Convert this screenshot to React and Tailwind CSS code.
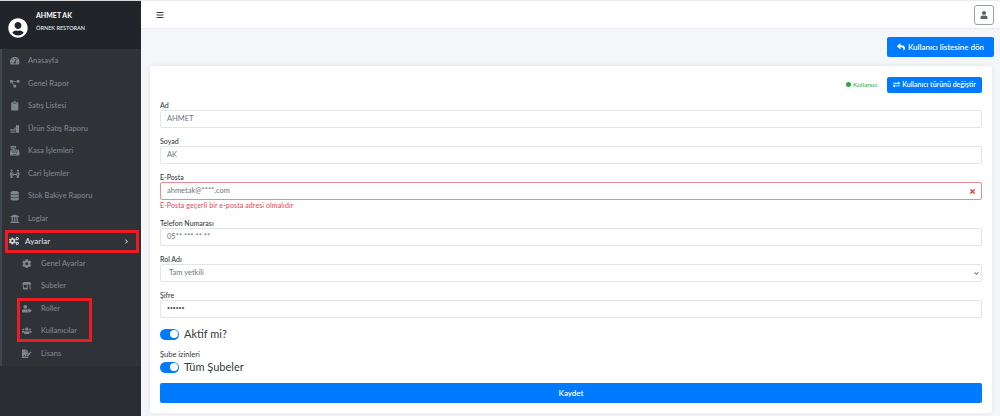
import {
  FaBars, FaCashRegister, FaChevronRight, FaClipboard, FaCog, FaCogs, FaDatabase,
  FaExchangeAlt, FaFileSignature, FaPeopleArrows, FaProjectDiagram, FaReply, FaStoreAlt,
  FaTachometerAlt, FaTimes, FaUser, FaUserCircle, FaUserTag, FaUsers, FaChevronDown, FaUniversity,
} from "react-icons/fa";

// paketlerde birebir karsiligi yok
function StockIcon({ className }) {
  return (
    <svg viewBox="0 0 24 24" fill="currentColor" width="1em" height="1em" className={className}>
      <rect x="1" y="13" width="4" height="4" />
      <rect x="6" y="13" width="4" height="4" />
      <rect x="1" y="19" width="13" height="3" />
      <rect x="11" y="9" width="3" height="8" />
      <path d="M15 3h8v19h-8z" />
    </svg>
  );
}

const menuTop = [
  ["Anasayfa", FaTachometerAlt],
  ["Genel Rapor", FaProjectDiagram],
  ["Satış Listesi", FaClipboard],
  ["Ürün Satış Raporu", StockIcon],
  ["Kasa İşlemleri", FaCashRegister],
  ["Cari İşlemler", FaPeopleArrows],
  ["Stok Bakiye Raporu", FaDatabase],
  ["Loglar", FaUniversity],
];

const subMenu = [
  ["Genel Ayarlar", FaCog],
  ["Şubeler", FaStoreAlt],
  ["Roller", FaUserTag],
  ["Kullanıcılar", FaUsers],
  ["Lisans", FaFileSignature],
];

function Field({ label, value, invalid, error, password }) {
  return (
    <div className="mb-[8px]">
      <label className="block h-[10px] text-[7px] leading-[10px] font-medium text-[#343a40]">{label}</label>
      <div
        className={`flex h-[18px] items-center justify-between rounded-[2px] border bg-white pl-[6px] pr-[5px] text-[7.5px] text-[#6c757d] ${
          invalid ? "border-[#e98a94]" : "border-[#e3e5e8]"
        }`}
      >
        <span className={password ? "text-[5px] text-[#495057]" : ""}>{value}</span>
        {invalid && <FaTimes className="text-[7px] text-[#dc3545]" />}
      </div>
      {error && <p className="mt-[1px] h-[9px] text-[7px] leading-[9px] font-medium tracking-[0.1px] text-[#e4505f]">{error}</p>}
    </div>
  );
}

function Toggle({ label }) {
  return (
    <div className="flex items-center gap-[5px]">
      <div className="flex h-[11px] w-[19px] items-center justify-end rounded-full bg-[#007bff] pr-[1.5px]">
        <div className="h-[8px] w-[8px] rounded-full bg-white" />
      </div>
      <span className="text-[11px] leading-[12px] text-[#343a40]">{label}</span>
    </div>
  );
}

function MenuItem({ label, Icon, sub }) {
  return (
    <div className={`flex h-[22.5px] items-center pb-[1px] text-[7.5px] font-medium text-[#7f868d] ${sub ? "pl-[18px]" : "pl-[6px]"}`}>
      <span className={`flex w-[14px] justify-center ${sub ? "mr-[7px]" : "mr-[6px]"}`}>
        <Icon className="text-[9.5px]" />
      </span>
      {label}
    </div>
  );
}

export default function App() {
  return (
    <div className="relative flex h-[416px] w-[1000px] overflow-hidden bg-[#f4f6f9] font-['Lato',sans-serif]">
      {/* sol menu */}
      <aside className="flex h-full w-[141px] shrink-0 flex-col border-t border-[#d8d8d8] bg-[#2a2e33]">
        <div className="flex h-[48px] shrink-0 bg-[#212529] pl-[8px]">
          <FaUserCircle className="mr-[8px] mt-[17px] text-[20px] text-white" />
          <div className="pt-[8px]">
            <div className="text-[7px] leading-[12px] font-bold text-white">AHMET AK</div>
            <div className="mt-[3px] text-[5.5px] leading-[8px] font-semibold text-[#dee2e6]">ÖRNEK RESTORAN</div>
          </div>
        </div>
        <nav className="border-l-[2px] border-[#3f474e] bg-[#2f3338] pb-[1px] pt-[1px]">
          {menuTop.map(([label, Icon]) => (
            <MenuItem key={label} label={label} Icon={Icon} />
          ))}
          <div className="flex h-[22.5px] items-center pl-[7px] pr-[12px] text-[8px] font-semibold text-[#d5d9dd]">
            <FaCogs className="mr-[6px] text-[10px]" />
            <span className="flex-1">Ayarlar</span>
            <FaChevronRight className="text-[5px]" />
          </div>
          {subMenu.map(([label, Icon]) => (
            <MenuItem key={label} label={label} Icon={Icon} sub />
          ))}
        </nav>
      </aside>

      <div className="flex min-w-0 flex-1 flex-col">
        {/* ust bar */}
        <header className="flex h-[29px] shrink-0 items-center justify-between border-y border-[#e9ecef] bg-white pl-[15px] pr-[6px]">
          <FaBars className="text-[8px] text-[#343a40]" />
          <div className="flex h-[20px] w-[20px] items-center justify-center rounded-[3px] border border-[#9aa0a6] bg-white">
            <FaUser className="text-[8px] text-[#5a6268]" />
          </div>
        </header>

        <main className="flex flex-1 flex-col pl-[9px] pr-[8px]">
          <div className="-mr-[2px] flex justify-end pt-[8px]">
            <button className="flex h-[20px] w-[107px] items-center justify-center gap-[3px] rounded-[2px] bg-[#007bff] text-[8px] font-semibold text-white">
              <FaReply className="text-[8px]" />
              Kullanıcı listesine dön
            </button>
          </div>

          <section className="mt-[9px] h-[347px] rounded-[3px] bg-white px-[10px] pt-[10px] shadow-[0_0_6px_rgba(0,0,0,0.08)]">
            <div className="flex h-[17px] items-center justify-end">
              <span className="mr-[10px] flex items-center gap-[2px] text-[6.5px] text-[#28a745]">
                <span className="h-[5px] w-[5px] rounded-full bg-[#28a745]" />
                Kullanıcı
              </span>
              <button className="flex h-[16px] w-[95px] items-center justify-center gap-[2px] rounded-[2px] bg-[#007bff] text-[7px] font-semibold text-white">
                <FaExchangeAlt className="text-[7px]" />
                Kullanıcı türünü değiştir
              </button>
            </div>

            <div className="mt-[7px]">
              <Field label="Ad" value="AHMET" />
              <Field label="Soyad" value="AK" />
              <Field label="E-Posta" value="ahmetak@****.com" invalid error="E-Posta geçerli bir e-posta adresi olmalıdır" />
              <Field label="Telefon Numarası" value="05** *** ** **" />
              <div className="mb-[8px]">
                <label className="block h-[10px] text-[7px] leading-[10px] font-medium text-[#343a40]">Rol Adı</label>
                <div className="flex h-[18px] items-center justify-between rounded-[2px] border border-[#e3e5e8] pl-[8px] pr-[2px] text-[7.5px] text-[#6c757d]">
                  Tam yetkili
                  <FaChevronDown className="text-[5px] text-[#495057]" />
                </div>
              </div>
              <Field label="Şifre" value="••••••" password />
            </div>

            <div className="mt-[10px]">
              <Toggle label="Aktif mi?" />
            </div>
            <div className="mt-[10px] h-[9px] text-[7.5px] leading-[9px] text-[#343a40]">Şube izinleri</div>
            <div className="mt-[2px]">
              <Toggle label="Tüm Şubeler" />
            </div>
            <button className="mt-[10px] h-[20px] w-full rounded-[2px] bg-[#007bff] text-[8px] font-semibold text-white">Kaydet</button>
          </section>
        </main>
      </div>

      {/* kirmizi isaretler */}
      <div className="absolute left-[5px] top-[230px] h-[23px] w-[134px] border-[3px] border-[#ed1c24]" />
      <div className="absolute left-[17px] top-[298px] h-[44px] w-[75px] border-[3px] border-[#ed1c24]" />
    </div>
  );
}
